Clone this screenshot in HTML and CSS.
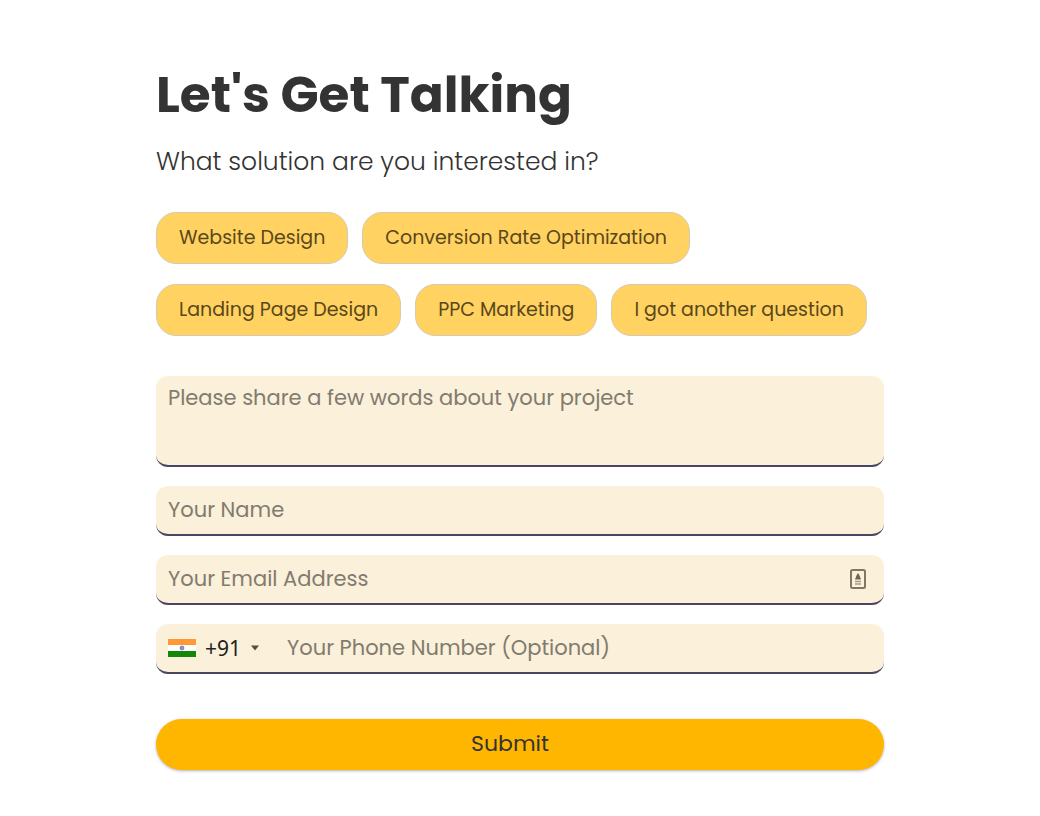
FILE: index.html
```html
<!DOCTYPE html>
<html lang="en">
<head>
    <meta charset="UTF-8">
    <meta name="viewport" content="width=device-width, initial-scale=1.0">
    <title>Let's Get Talking</title>
    <link rel="stylesheet" href="styles.css">
</head>
<body>
    <main class="contact">
        <h1 class="contact__title">Let's Get Talking</h1>
        <p class="contact__desc" id="solution">What solution are you interested in?</p>

        <form class="form" action="#">
            <div class="chips" role="group" aria-labelledby="solution">
                <button type="button" class="chip">Website Design</button>
                <button type="button" class="chip">Conversion Rate Optimization</button>
                <button type="button" class="chip">Landing Page Design</button>
                <button type="button" class="chip">PPC Marketing</button>
                <button type="button" class="chip">I got another question</button>
            </div>

            <div class="fields">
                <div class="field field--area">
                    <textarea class="field__input" name="project" aria-label="About your project" placeholder="Please share a few words about your project"></textarea>
                </div>
                <div class="field">
                    <input class="field__input" type="text" name="name" aria-label="Your Name" placeholder="Your Name">
                </div>
                <div class="field">
                    <input class="field__input" type="email" name="email" aria-label="Your Email Address" placeholder="Your Email Address">
                    <svg class="field__icon" viewBox="0 0 16 20" aria-hidden="true">
                        <rect x="1" y="1" width="14" height="18" rx="1.5" fill="none" stroke="#807865" stroke-width="2"/>
                        <path d="M8 4L9.500 6.500L11 10.500H5L6.500 6.500Z" fill="#6b6455"/>
                        <path d="M5 12.500H11M5 15H11" stroke="#a39b87" stroke-width="1.500"/>
                    </svg>
                </div>
                <div class="field">
                    <div class="country">
                        <svg class="country__flag" viewBox="0 0 28 18" aria-hidden="true">
                            <rect width="28" height="18" fill="#fff"/>
                            <rect width="28" height="6" fill="#ff9933"/>
                            <rect y="12" width="28" height="6" fill="#138808"/>
                            <circle cx="14" cy="9" r="2" fill="#8f92c4" stroke="#5c60a8" stroke-width="0.600"/>
                        </svg>
                        <select class="country__code" name="code" aria-label="Country code">
                            <option>+91</option>
                            <option>+44</option>
                            <option>+1</option>
                        </select>
                        <svg class="country__arrow" viewBox="0 0 8 6" aria-hidden="true">
                            <path d="M0 0.500H8L4 5.500Z" fill="#554e42"/>
                        </svg>
                    </div>
                    <input class="field__input" type="tel" name="phone" aria-label="Your Phone Number" placeholder="Your Phone Number (Optional)">
                </div>
            </div>

            <button type="submit" class="submit">Submit</button>
        </form>
    </main>
</body>
</html>
```
FILE: styles.css
```css
* {
    margin: 0;
    padding: 0;
    box-sizing: border-box;
}
body {
    background-color: #fff;
    color: #333;
    font-family: Poppins, Inter, sans-serif;
}
button,
input,
textarea,
select {
    border: 0;
    background: none;
    color: inherit;
    font: inherit;
}
.contact {
    width: 70%;
    margin: 0 auto;
    padding: 64px 0 44px;
}
.contact__title {
    font-size: 50px;
    font-weight: 700;
    line-height: 62px;
}
.contact__desc {
    margin-top: 18px;
    font-size: 25px;
    font-weight: 300;
    line-height: 36px;
}

/* solution buttons */
.chips {
    display: flex;
    flex-wrap: wrap;
    gap: 20px 14px;
    margin-top: 32px;
}
.chip {
    height: 52px;
    padding: 0 22px 2px;
    border: 1px solid #d6cbb0;
    border-radius: 20px;
    background-color: #ffd262;
    color: #5a4718;
    font-size: 19px;
    cursor: pointer;
}

/* form fields */
.fields {
    display: flex;
    flex-direction: column;
    gap: 19px;
    margin-top: 40px;
}
.field {
    display: flex;
    align-items: center;
    height: 50px;
    padding: 0 18px 0 12px;
    border-bottom: 2px solid #4b4560;
    border-radius: 12px;
    background-color: #fbf0d9;
    font-size: 21px;
}
.field--area {
    height: 91px;
}
.field__input {
    flex: 1;
    min-width: 0;
    height: 100%;
    padding-bottom: 2px;
    outline: none;
    resize: none;
}
.field--area .field__input {
    padding: 8px 0;
    line-height: 28px;
}
.field__input::placeholder {
    color: #817b70;
    opacity: 1;
}
.field__icon {
    width: 16px;
    height: 20px;
}
.country {
    display: flex;
    align-items: center;
    margin-right: 28px;
}
.country__flag {
    width: 28px;
    height: 18px;
    margin-right: 9px;
}
.country__code {
    width: 46px;
    appearance: none;
    color: #222;
    font-family: "Noto Sans", sans-serif;
    outline: none;
}
.country__arrow {
    width: 8px;
    height: 6px;
    pointer-events: none;
}

.submit {
    display: block;
    width: 100%;
    height: 51px;
    margin-top: 45px;
    padding: 0 20px 2px 0;
    border-radius: 26px;
    background-color: #ffb600;
    box-shadow: 0 1px 3px rgba(70, 60, 90, 0.4);
    font-size: 22px;
    cursor: pointer;
}
```
